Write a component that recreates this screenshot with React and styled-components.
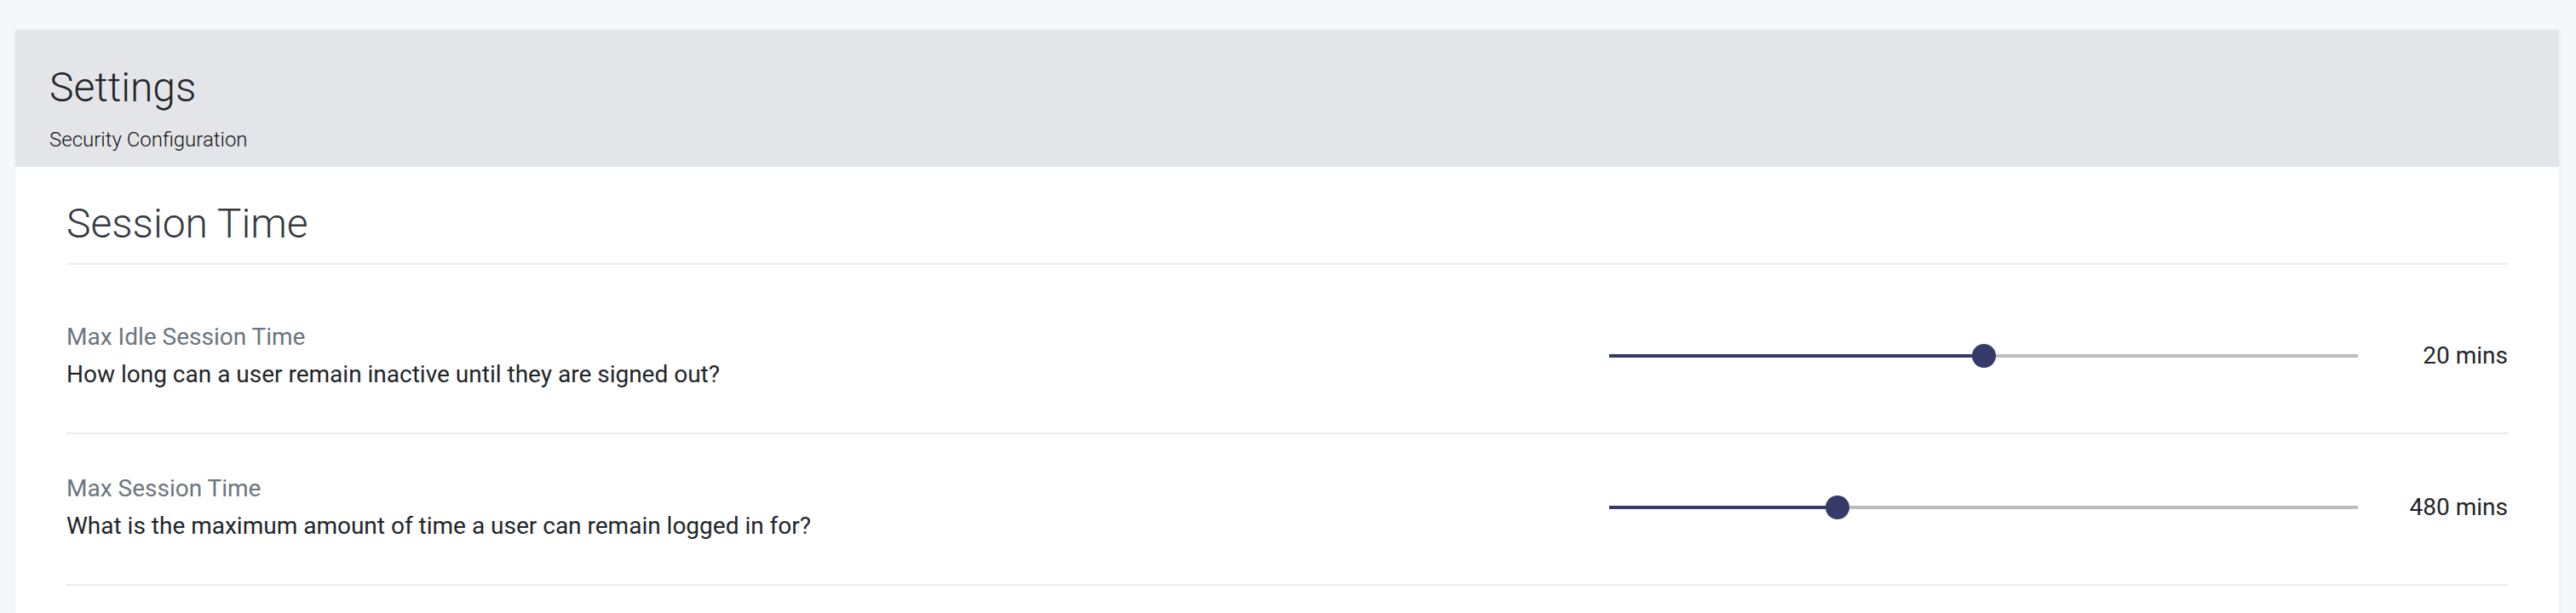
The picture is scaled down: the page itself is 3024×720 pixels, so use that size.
import React from "react";
import styled, { createGlobalStyle } from "styled-components";

const GlobalStyle = createGlobalStyle`
  html, body {
    margin: 0;
    padding: 0;
    background: #f6f7f9;
    font-family: Roboto, "Liberation Sans", Arial, sans-serif;
    color: #212529;
  }
  * { box-sizing: border-box; }
`;

const Page = styled.div`
  padding: 35px 20px 0 18px;
`;

const Card = styled.section`
  background: #ffffff;
  box-shadow: 0 1px 4px rgba(0, 0, 0, 0.05);
`;

const Header = styled.header`
  background: #e4e5e9;
  padding: 39px 40px 14px;
`;

const Title = styled.h1`
  margin: 0;
  font-size: 48px;
  line-height: 58px;
  font-weight: 300;
  color: #212529;
`;

const Subtitle = styled.div`
  margin-top: 14px;
  font-size: 24px;
  line-height: 36px;
  font-weight: 300;
  color: #111418;
`;

const Body = styled.div`
  padding: 38px 60px 60px;
`;

const SectionTitle = styled.h2`
  margin: 0 0 21px;
  padding-bottom: 17px;
  border-bottom: 2px solid #e9ecef;
  font-size: 48px;
  line-height: 58px;
  font-weight: 300;
  color: #343a40;
`;

const Row = styled.div`
  display: grid;
  grid-template-columns: 1fr 879px 176px;
  align-items: center;
  padding: 43px 0 47px;
  border-bottom: 2px solid #e9ecef;
`;

const Info = styled.div`
  display: flex;
  flex-direction: column;
  gap: 2px;
`;

const Label = styled.div`
  font-size: 28px;
  line-height: 42px;
  color: #6c757d;
`;

const Question = styled.div`
  font-size: 28px;
  line-height: 42px;
  color: #212529;
`;

const Track = styled.div`
  position: relative;
  height: 4px;
  background: #bdbdbd;
`;

const Fill = styled.div`
  position: absolute;
  left: 0;
  top: 0;
  bottom: 0;
  background: #363a68;
`;

const Thumb = styled.div`
  position: absolute;
  top: 50%;
  width: 28px;
  height: 28px;
  border-radius: 50%;
  background: #363a68;
  transform: translate(-50%, -50%);
`;

const Value = styled.div`
  font-size: 28px;
  line-height: 42px;
  text-align: right;
  color: #212529;
`;

function Slider({ percent }) {
  return (
    <Track>
      <Fill style={{ width: `${percent}%` }} />
      <Thumb style={{ left: `${percent}%` }} />
    </Track>
  );
}

const settings = [
  {
    label: "Max Idle Session Time",
    question: "How long can a user remain inactive until they are signed out?",
    value: 20,
    min: 0,
    max: 40,
  },
  {
    label: "Max Session Time",
    question: "What is the maximum amount of time a user can remain logged in for?",
    value: 480,
    min: 60,
    max: 1440,
  },
];

export default function App() {
  return (
    <>
      <GlobalStyle />
      <Page>
        <Card>
          <Header>
            <Title>Settings</Title>
            <Subtitle>Security Configuration</Subtitle>
          </Header>
          <Body>
            <SectionTitle>Session Time</SectionTitle>
            {settings.map((s) => (
              <Row key={s.label}>
                <Info>
                  <Label>{s.label}</Label>
                  <Question>{s.question}</Question>
                </Info>
                <Slider percent={((s.value - s.min) / (s.max - s.min)) * 100} />
                <Value>{s.value} mins</Value>
              </Row>
            ))}
          </Body>
        </Card>
      </Page>
    </>
  );
}
